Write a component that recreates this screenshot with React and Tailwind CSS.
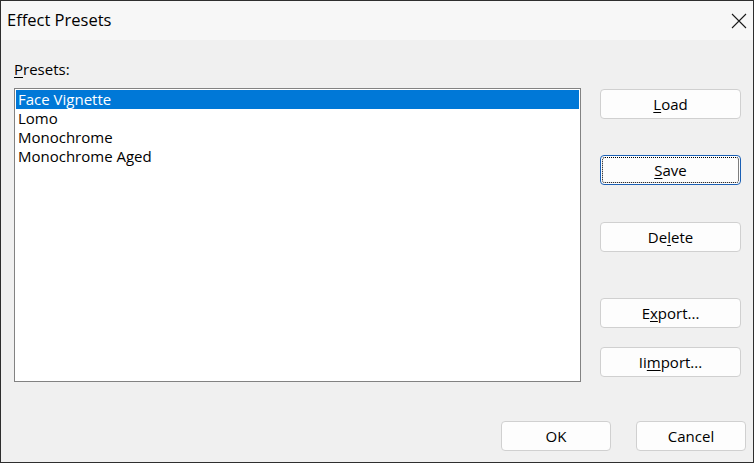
import React, { useState } from 'react';

const font = { fontFamily: '"Open Sans", "Noto Sans", sans-serif' };

const Btn = ({ label, u, focused, className = '' }) => {
  const i = label.indexOf(u);
  return (
    <button
      className={`relative h-[30px] rounded-[4px] border bg-[#fdfdfd] text-[15px] text-black ${
        focused ? 'border-[#1a5fb4]' : 'border-[#d0d0d0]'
      } ${className}`}
    >
      {focused && <span className="absolute inset-[1px] rounded-[3px] border border-dotted border-black" />}
      {u ? (
        <span>
          {label.slice(0, i)}
          <span className="underline underline-offset-2">{u}</span>
          {label.slice(i + u.length)}
        </span>
      ) : (
        label
      )}
    </button>
  );
};

const presets = ['Face Vignette', 'Lomo', 'Monochrome', 'Monochrome Aged'];

const App = () => {
  const [sel, setSel] = useState(0);

  return (
    <div className="w-[754px] h-[463px] flex flex-col border border-[#2e2e2e] bg-[#f0f0f0] text-black" style={font}>
      <div className="h-[39px] flex items-center justify-between bg-[#f7f7f7] pl-[6px] pr-[6px]">
        <span className="text-[16.5px]">Effect Presets</span>
        <svg width="16" height="16" viewBox="0 0 16 16">
          <path d="M1 1 L15 15 M15 1 L1 15" stroke="#1a1a1a" strokeWidth="1.1" fill="none" />
        </svg>
      </div>

      <div className="flex">
        <div className="ml-[13px] pt-[19px] flex flex-col">
          <div className="h-[20px] leading-[20px] text-[15px]">
            <span className="underline underline-offset-2">P</span>resets:
          </div>
          <div className="mt-[9px] w-[567px] h-[294px] border border-[#828282] bg-white p-[1px]">
            {presets.map((p, idx) => (
              <div
                key={p}
                onClick={() => setSel(idx)}
                className={`h-[19px] leading-[19px] pl-[2px] text-[15px] ${
                  sel === idx ? 'bg-[#0078d7] text-white' : 'text-black'
                }`}
              >
                {p}
              </div>
            ))}
          </div>
        </div>

        <div className="ml-[19px] flex flex-col w-[141px]">
          <Btn label="Load" u="L" className="mt-[49px]" />
          <Btn label="Save" u="S" focused className="mt-[36px]" />
          <Btn label="Delete" u="l" className="mt-[37px]" />
          <Btn label="Export..." u="x" className="mt-[46px]" />
          <Btn label="Iimport..." u="m" className="mt-[19px]" />
        </div>
      </div>

      <div className="flex justify-end gap-[25px] mt-[39px] pr-[7px]">
        <Btn label="OK" className="w-[110px]" />
        <Btn label="Cancel" className="w-[110px]" />
      </div>
    </div>
  );
};

export default App;
